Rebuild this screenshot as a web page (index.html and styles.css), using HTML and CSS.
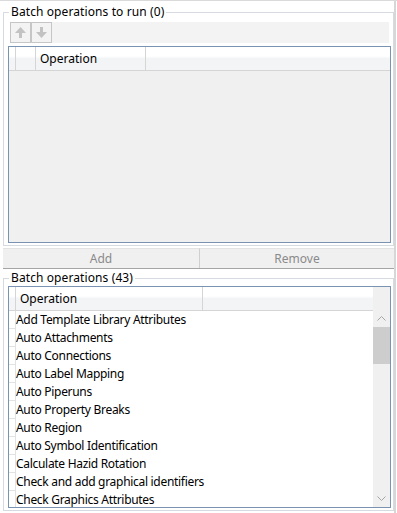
FILE: index.html
```html
<!DOCTYPE html>
<html lang="en">
  <head>
    <meta charset="UTF-8" />
    <meta name="viewport" content="width=device-width, initial-scale=1.0" />
    <title>Batch Operations</title>
    <link rel="stylesheet" href="styles.css">
  </head>
  <body>
    <div class="window">
      <fieldset class="group group-run">
        <legend>Batch operations to run (0)</legend>
        <div class="toolbar">
          <button class="tool" disabled>
            <svg width="11" height="11" viewBox="0 0 11 11">
              <polygon points="5.5,0 11,6 0,6" fill="#c2c2c2" />
              <rect x="4" y="6" width="3" height="5" fill="#c2c2c2" />
            </svg>
          </button>
          <button class="tool" disabled>
            <svg width="11" height="11" viewBox="0 0 11 11">
              <rect x="4" y="0" width="3" height="5" fill="#c2c2c2" />
              <polygon points="0,5 11,5 5.5,11" fill="#c2c2c2" />
            </svg>
          </button>
        </div>
        <div class="grid grid-run">
          <div class="grid-head">
            <div class="hcell hc-pad"></div>
            <div class="hcell hc-row"></div>
            <div class="hcell hc-op">Operation</div>
          </div>
        </div>
      </fieldset>

      <div class="actions">
        <button class="action action-add" disabled>Add</button>
        <button class="action" disabled>Remove</button>
      </div>

      <fieldset class="group group-all">
        <legend>Batch operations (43)</legend>
        <div class="grid grid-all">
          <div class="grid-main">
            <div class="grid-head">
              <div class="hcell hc-pad"></div>
              <div class="hcell hc-name">Operation</div>
            </div>
            <ul class="rows" id="rows"></ul>
          </div>
          <div class="vscroll">
            <div class="vs-top"></div>
            <div class="vs-btn">
              <svg width="9" height="5" viewBox="0 0 9 5"><polyline points="0.5,4.5 4.5,0.5 8.5,4.5" fill="none" stroke="#a6a6a6" /></svg>
            </div>
            <div class="vs-thumb"></div>
            <div class="vs-track"></div>
            <div class="vs-btn">
              <svg width="9" height="5" viewBox="0 0 9 5"><polyline points="0.5,0.5 4.5,4.5 8.5,0.5" fill="none" stroke="#a6a6a6" /></svg>
            </div>
          </div>
        </div>
      </fieldset>
    </div>

    <script>
      // only the rows that fit in the visible part of the list
      const operations = [
        "Add Template Library Attributes",
        "Auto Attachments",
        "Auto Connections",
        "Auto Label Mapping",
        "Auto Piperuns",
        "Auto Property Breaks",
        "Auto Region",
        "Auto Symbol Identification",
        "Calculate Hazid Rotation",
        "Check and add graphical identifiers",
        "Check Graphics Attributes"
      ];

      const list = document.getElementById("rows");
      operations.forEach((name) => {
        const row = document.createElement("li");
        row.className = "row";

        const head = document.createElement("span");
        head.className = "row-head";

        const cell = document.createElement("span");
        cell.className = "row-cell";
        cell.textContent = name;

        row.appendChild(head);
        row.appendChild(cell);
        list.appendChild(row);
      });
    </script>
  </body>
</html>
```

FILE: styles.css
```css
html,
body {
  margin: 0;
  background: #fff;
}
body {
  width: 397px;
  height: 513px;
  border-top: 1px solid #dadada;
  box-sizing: border-box;
  font-family: "Noto Sans", "Segoe UI", sans-serif;
  font-size: 12px;
  color: #000;
  overflow: hidden;
}
.window {
  width: 396px;
  height: 512px;
  padding-top: 3px;
  box-sizing: border-box;
  border-right: 2px solid #d7d7d7;
}

/* group boxes */
.group {
  margin: 0 0 0 3px;
  border: 1px solid #d5dbe0;
  min-width: 0;
}
.group legend {
  margin-left: 1px;
  padding: 0 2px;
  line-height: 16px;
  letter-spacing: 0.1px;
}
.group-run {
  padding: 2px 2px 2px 4px;
}
.group-all {
  margin-top: 1px;
  padding: 0 2px 2px 4px;
}

/* toolbar */
.toolbar {
  display: flex;
  height: 21px;
  margin: 0 2px 3px;
  background: #f3f3f3;
}
.tool {
  width: 21px;
  height: 21px;
  padding: 0;
  border: 1px solid #c6c6c6;
  background: #f3f3f3;
  display: flex;
  align-items: center;
  justify-content: center;
}

/* grids */
.grid {
  border: 1px solid #7b93b3;
  box-sizing: border-box;
}
.grid-run {
  height: 197px;
  background: #f0f0f0;
}
.grid-all {
  height: 222px;
  display: flex;
  background: #fff;
}
.grid-head {
  display: flex;
  height: 24px;
  box-sizing: border-box;
  border-bottom: 1px solid #d5d5d5;
  background: linear-gradient(#fff 0%, #fff 40%, #f3f4f6 50%, #f3f4f6 100%);
}
.hcell {
  box-sizing: border-box;
  border-right: 1px solid #d5d5d5;
  line-height: 23px;
  padding-left: 4px;
  white-space: nowrap;
}
.hc-pad {
  width: 7px;
  padding: 0;
}
.hc-row {
  width: 20px;
}
.hc-op {
  width: 110px;
}
.hc-name {
  width: 187px;
}

.grid-main {
  flex: 1;
  min-width: 0;
  overflow: hidden;
}
.rows {
  list-style: none;
  margin: 0;
  padding: 0;
}
.row {
  display: flex;
  height: 18px;
  line-height: 18px;
}
.row-head {
  width: 7px;
  flex: none;
  box-sizing: border-box;
  border-right: 1px solid #e2e2e2;
  border-bottom: 1px solid #e2e2e2;
}
.row-cell {
  white-space: nowrap;
  letter-spacing: -0.3px;
}

/* scrollbar */
.vscroll {
  width: 17px;
  flex: none;
  display: flex;
  flex-direction: column;
  background: #f0f0f0;
}
.vs-top {
  height: 23px;
}
.vs-btn {
  height: 17px;
  display: flex;
  align-items: center;
  justify-content: center;
}
.vs-thumb {
  height: 37px;
  background: #cdcdcd;
}
.vs-track {
  flex: 1;
}

/* add / remove */
.actions {
  display: flex;
  margin: 2px 0 0 3px;
  border-bottom: 1px solid #a5a5a5;
}
.action {
  flex: 1;
  height: 20px;
  padding: 0;
  border: none;
  border-top: 1px solid #e3e3e3;
  background: #f0f0f0;
  font: inherit;
  line-height: 19px;
  color: #8a8a8a;
}
.action-add {
  flex: 0 0 197px;
  border-right: 1px solid #cfcfcf;
}
```
